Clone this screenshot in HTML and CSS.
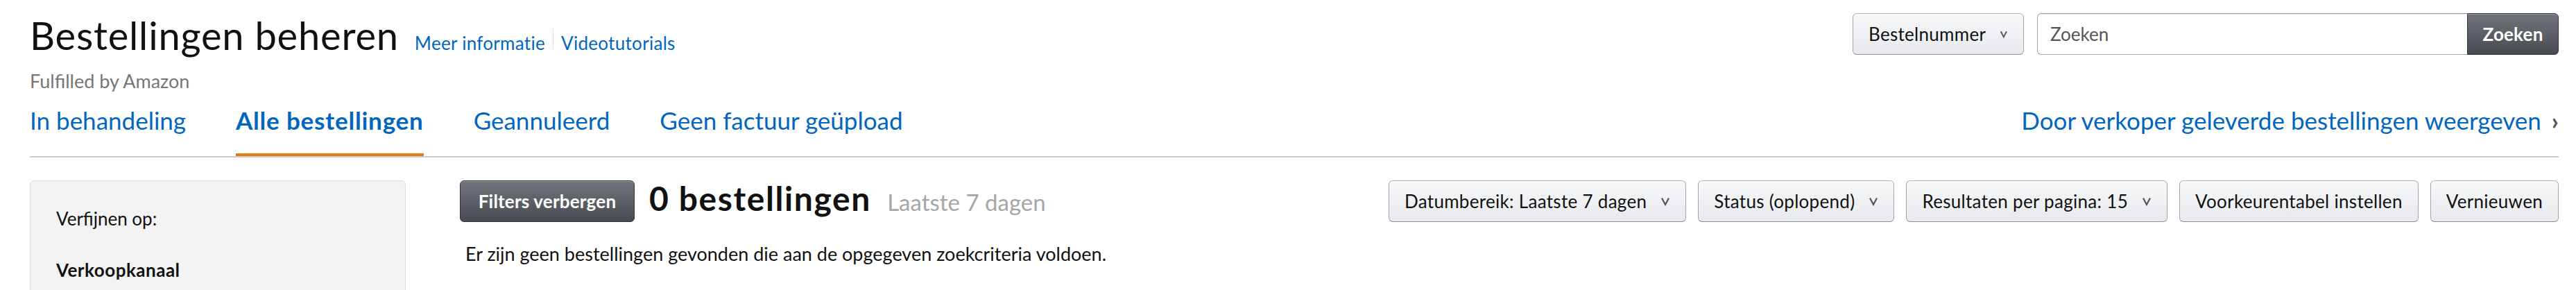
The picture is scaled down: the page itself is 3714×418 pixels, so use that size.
FILE: index.html
```html
<!DOCTYPE html>
<html lang="nl">
<head>
  <meta charset="UTF-8"/>
  <meta name="viewport" content="width=device-width, initial-scale=1.0"/>
  <title>Bestellingen beheren</title>
  <link rel="stylesheet" href="styles.css">
</head>
<body>
  <!-- Kop: titel + zoekbalk -->
  <header class="page-header">
    <div class="title-block">
      <div class="title-row">
        <h1>Bestellingen beheren</h1>
        <a href="#" class="help-link">Meer informatie</a>
        <span class="divider"></span>
        <a href="#" class="help-link">Videotutorials</a>
      </div>
      <div class="subtitle">Fulfilled by Amazon</div>
    </div>

    <form class="search" onsubmit="return false">
      <button type="button" class="btn select-btn search-type">
        Bestelnummer
        <svg class="caret" viewBox="0 0 14 16"><polyline points="2,3.5 7,13 12,3.5"/></svg>
      </button>
      <div class="search-field">
        <input type="text" placeholder="Zoeken"/>
        <button type="submit" class="btn btn-dark search-go">Zoeken</button>
      </div>
    </form>
  </header>

  <!-- Tabbladen -->
  <nav class="tabs">
    <div class="tab-list">
      <a href="#" class="tab">In behandeling</a>
      <a href="#" class="tab active">Alle bestellingen</a>
      <a href="#" class="tab">Geannuleerd</a>
      <a href="#" class="tab">Geen factuur geüpload</a>
    </div>
    <a href="#" class="mfn-link">Door verkoper geleverde bestellingen weergeven <span class="chev">›</span></a>
  </nav>

  <div class="content">
    <!-- Filters -->
    <aside class="filters">
      <div class="refine">Verfijnen op:</div>
      <div class="filter-title">Verkoopkanaal</div>
    </aside>

    <!-- Resultaten -->
    <main class="results">
      <div class="results-bar">
        <button type="button" class="btn btn-dark toggle-filters">Filters verbergen</button>
        <h2 class="count">0 bestellingen <span class="range">Laatste 7 dagen</span></h2>
        <div class="toolbar">
          <button type="button" class="btn select-btn">Datumbereik: Laatste 7 dagen
            <svg class="caret" viewBox="0 0 14 16"><polyline points="2,3.5 7,13 12,3.5"/></svg></button>
          <button type="button" class="btn select-btn">Status (oplopend)
            <svg class="caret" viewBox="0 0 14 16"><polyline points="2,3.5 7,13 12,3.5"/></svg></button>
          <button type="button" class="btn select-btn">Resultaten per pagina: 15
            <svg class="caret" viewBox="0 0 14 16"><polyline points="2,3.5 7,13 12,3.5"/></svg></button>
          <button type="button" class="btn">Voorkeurentabel instellen</button>
          <button type="button" class="btn">Vernieuwen</button>
        </div>
      </div>
      <p class="empty">Er zijn geen bestellingen gevonden die aan de opgegeven zoekcriteria voldoen.</p>
    </main>
  </div>
</body>
</html>
```

FILE: styles.css
```css
body {
  font-family: Lato, "Liberation Sans", sans-serif;
  color: #111;
  background: #fff;
  margin: 0;
  padding: 17px 25px 0 43px;
  overflow: hidden;
}
a { color: #0066c0; text-decoration: none; }

/* ---------- kop ---------- */
.page-header {
  display: flex;
  justify-content: space-between;
  align-items: flex-start;
}
.title-row {
  display: flex;
  align-items: baseline;
}
h1 {
  margin: 0 23px 0 0;
  font-size: 56px;
  font-weight: 400;
  line-height: 1.2;
  letter-spacing: 0.8px;
}
.help-link { font-size: 26px; letter-spacing: 0.3px; }
.divider {
  align-self: center;
  width: 1px;
  height: 30px;
  margin: 10px 11px 0;
  background: #ddd;
}
.subtitle {
  margin-top: 17px;
  font-size: 27px;
  line-height: 1.2;
  color: #767676;
}

/* ---------- knoppen ---------- */
.btn {
  font-family: inherit;
  font-size: 26px;
  letter-spacing: 0.3px;
  color: #111;
  height: 60px;
  padding: 0 22px;
  border: 1px solid #adb1b8;
  border-color: #adb1b8 #a2a6ac #8d9096;
  border-radius: 6px;
  background: linear-gradient(to bottom, #f7f8fa, #e7e9ec);
  box-shadow: inset 0 1px 0 rgba(255,255,255,0.6);
  display: inline-flex;
  align-items: center;
  white-space: nowrap;
  cursor: pointer;
}
.btn-dark {
  color: #fff;
  font-weight: 700;
  letter-spacing: 0.2px;
  border-color: #32363b;
  background: linear-gradient(to bottom, #72767c, #474b51);
  box-shadow: inset 0 1px 0 rgba(255,255,255,0.25);
}
.caret {
  width: 14px;
  height: 16px;
  margin-left: 20px;
  fill: none;
  stroke: #555;
  stroke-width: 2.2;
}

/* ---------- zoeken ---------- */
.search {
  display: flex;
  gap: 19px;
  margin-top: 2px;
}
.search-type { width: 247px; justify-content: space-between; }
.search-field { display: flex; }
.search-field input {
  width: 620px;
  height: 60px;
  box-sizing: border-box;
  padding: 0 18px;
  font-family: inherit;
  font-size: 26px;
  border: 1px solid #a6a6a6;
  border-top-color: #949494;
  border-right: none;
  border-radius: 6px 0 0 6px;
  box-shadow: inset 0 1px 0 rgba(0,0,0,0.07);
  outline: none;
}
.search-field input::placeholder { color: #555; }
.search-go {
  width: 132px;
  justify-content: center;
  border-radius: 0 6px 6px 0;
}

/* ---------- tabs ---------- */
.tabs {
  display: flex;
  justify-content: space-between;
  align-items: baseline;
  margin-top: 18px;
  border-bottom: 2px solid #ccc;
}
.tab-list { display: flex; }
.tab {
  font-size: 35px;
  line-height: 1.2;
  margin-right: 72px;
  padding-bottom: 27px;
  border-bottom: 4px solid transparent;
}
.tab.active {
  font-weight: 700;
  letter-spacing: 0.8px;
  border-bottom-color: #e47911;
}
.mfn-link { font-size: 35px; line-height: 1.2; }
.chev {
  color: #555;
  font-weight: 700;
  margin-left: 6px;
}

/* ---------- inhoud ---------- */
.content {
  display: flex;
  align-items: flex-start;
  margin-top: 33px;
}
.filters {
  flex: 0 0 542px;
  box-sizing: border-box;
  min-height: 400px;
  padding: 39px 37px;
  background: #f3f3f3;
  border: 1px solid #ddd;
  border-radius: 6px;
  font-size: 26px;
  line-height: 1.2;
}
.filter-title {
  margin-top: 43px;
  font-weight: 700;
  letter-spacing: 0.5px;
}

.results {
  flex: 1;
  margin-left: 78px;
}
.results-bar {
  display: flex;
  align-items: flex-start;
}
.toggle-filters { width: 252px; justify-content: center; }
.count {
  margin: 0 0 0 21px;
  font-size: 48px;
  line-height: 52px;
  font-weight: 700;
  letter-spacing: 1.6px;
  white-space: nowrap;
}
.range {
  margin-left: 10px;
  font-size: 33px;
  font-weight: 400;
  letter-spacing: 0;
  color: #a6a6a6;
}
.toolbar {
  display: flex;
  gap: 17px;
  margin-left: auto;
}
.empty {
  margin: 30px 0 0 8px;
  font-size: 27px;
  line-height: 1.2;
}
```
